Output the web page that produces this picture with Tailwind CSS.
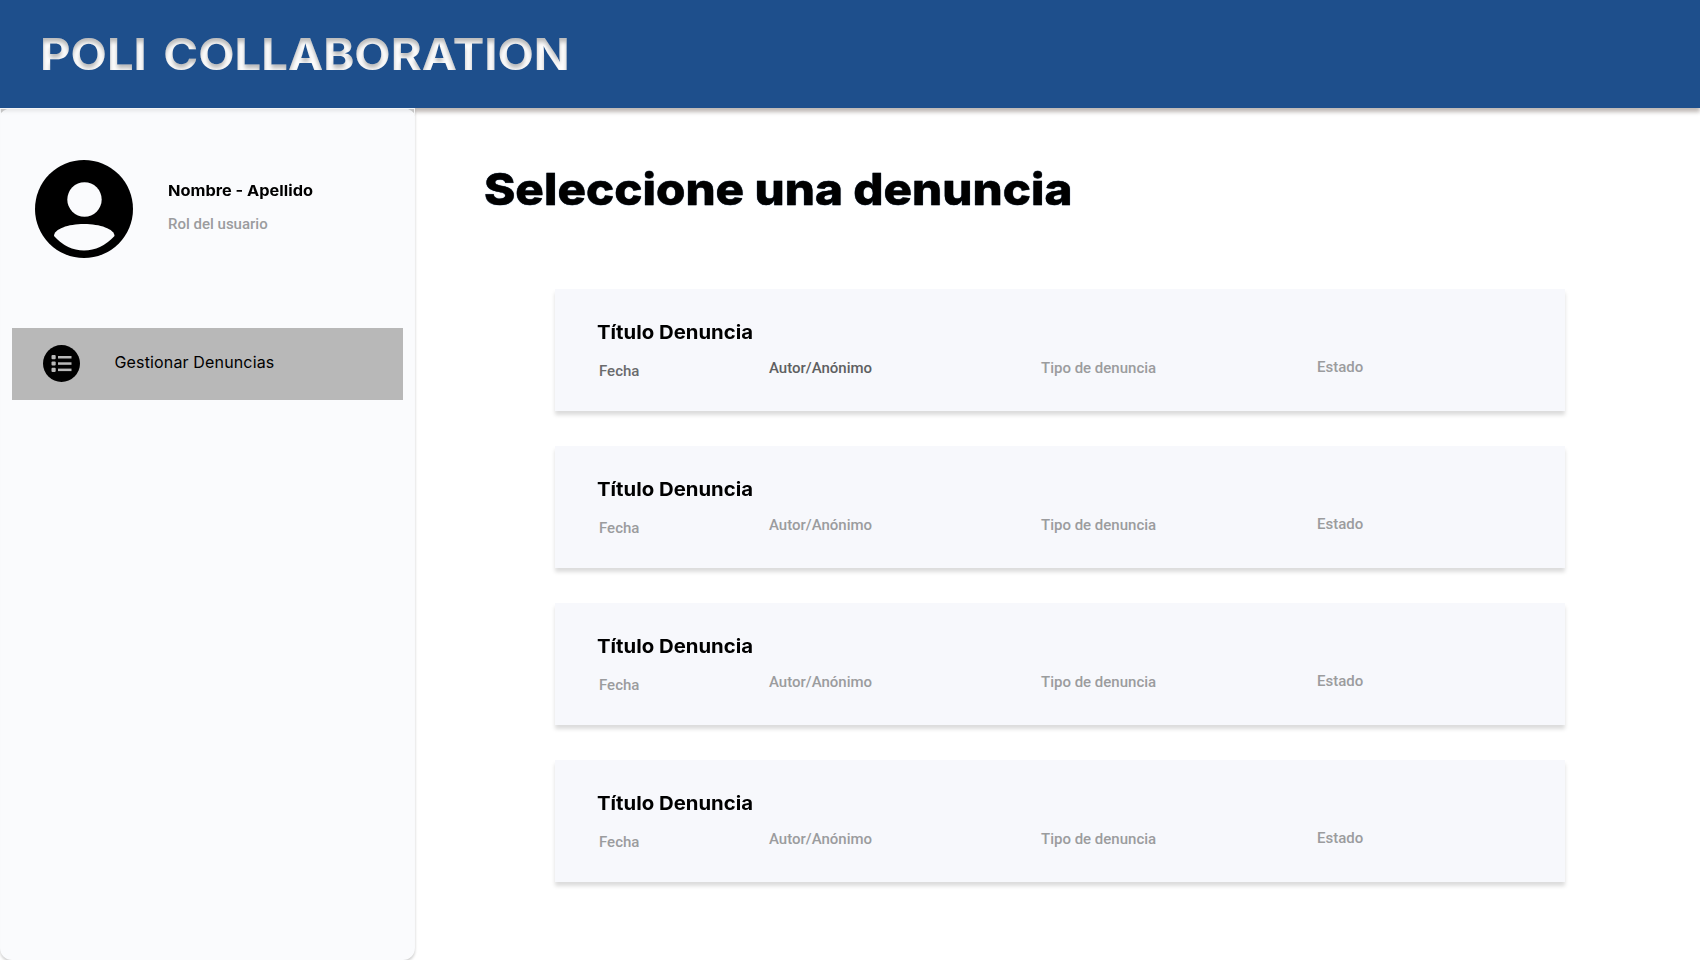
<!DOCTYPE html>
<html lang="es">
<head>
<meta charset="utf-8">
<title>Poli Collaboration</title>
<script src="https://cdn.jsdelivr.net/npm/@tailwindcss/browser@4"></script>
</head>
<body class="flex h-screen flex-col overflow-hidden bg-white font-['Inter',sans-serif] text-black">
<svg class="absolute h-0 w-0" aria-hidden="true">
  <filter id="inset" x="-5%" y="-5%" width="110%" height="110%" color-interpolation-filters="sRGB">
    <feOffset in="SourceAlpha" dy="4" result="moved"/>
    <feGaussianBlur in="moved" stdDeviation="2" result="soft"/>
    <feFlood flood-color="#000" flood-opacity=".27" result="ink"/>
    <feComposite in="ink" in2="soft" operator="out" result="outer"/>
    <feComposite in="outer" in2="SourceAlpha" operator="in" result="shade"/>
    <feMerge><feMergeNode in="SourceGraphic"/><feMergeNode in="shade"/></feMerge>
  </filter>
</svg>
<header class="h-[108px] shrink-0 bg-[#1e4f8c] pl-10 shadow-[0_4px_4px_rgba(40,20,10,0.3)]">
  <h1 class="w-max origin-left scale-x-[1.072] text-[44px] leading-[108px] font-bold text-white [filter:url(#inset)] [word-spacing:5px]">POLI COLLABORATION</h1>
</header>
<div class="flex min-h-0 flex-1">
  <aside class="relative w-[415px] shrink-0 rounded-b-xl bg-[#fafbfd] px-3 shadow-[0_2px_3px_rgba(0,0,0,0.2),inset_0_6px_4px_-3px_rgba(0,0,0,0.09)]">
    <svg class="absolute top-0 left-0 h-2 w-full" viewBox="0 0 415 8">
      <path d="M1 1H7Q3 2.500 1 5ZM414 1H408Q412 2.500 414 5Z" fill="#c4c4c4"/>
      <path d="M0 .5H415M414.500 0V8" stroke="#f4f5f6" fill="none"/>
    </svg>
    <div class="flex pt-[52px] pl-[23px]">
      <svg class="h-[98px] w-[98px]" viewBox="0 0 98 98">
        <circle cx="49" cy="49" r="49"/>
        <circle cx="49.5" cy="39.5" r="17.2" fill="#fafbfd"/>
        <path d="M19 76C19 69 33 64 49 64s30.500 5 30.500 12Q66 90.500 49 90.500T19 76Z" fill="#fafbfd"/>
      </svg>
      <div class="pt-[21px] pl-[34.500px]">
        <p class="w-max origin-left scale-x-[1.09] text-[15px] leading-5 font-bold">Nombre - Apellido</p>
        <p class="mt-[13px] ml-[0.5px] font-['Roboto',sans-serif] text-[15px] leading-5 font-medium text-[#9b9c9e]">Rol del usuario</p>
      </div>
    </div>
    <nav class="mt-[70px] flex h-[72px] items-center bg-[#b8b8b8] pl-[31px]">
      <svg class="mb-px h-[37px] w-[37px]" viewBox="0 0 37 37">
        <circle cx="18.500" cy="18.500" r="18.500"/>
        <g fill="#b8b8b8">
          <rect x="8.500" y="10" width="4.200" height="4.200" rx="1"/><rect x="15" y="11" width="13.500" height="2.500"/>
          <rect x="8.500" y="16.400" width="4.200" height="4.200" rx="1"/><rect x="15" y="17.300" width="13.500" height="2.500"/>
          <rect x="8.500" y="22.800" width="4.200" height="4.200" rx="1"/><rect x="15" y="23.600" width="13.500" height="2.500"/>
        </g>
      </svg>
      <a class="ml-[34.500px] pb-1 text-base leading-6 tracking-[0.15px]">Gestionar Denuncias</a>
    </nav>
  </aside>
  <main class="flex-1 pt-[51px]">
    <h2 class="ml-[69px] w-max origin-left scale-x-[1.068] text-[44.500px] leading-[60px] font-extrabold [-webkit-text-stroke:0.4px_#000] [text-shadow:0_0_1px_#1e4f8c]">Seleccione una denuncia</h2>
    <div id="list" class="mt-[70px] ml-[140px] flex w-[1010px] flex-col gap-[35px]"></div>
  </main>
</div>
<template id="card">
  <article class="h-[122px] bg-[#f7f8fc] pt-8 pl-[42px] shadow-[0_4px_4px_rgba(0,0,0,0.14)]">
    <h3 class="w-max origin-left scale-x-[1.07] text-[19px] leading-6 font-bold">Título Denuncia</h3>
    <div class="ml-0.5 grid grid-cols-[170px_272px_276px_1fr] font-['Roboto',sans-serif] text-[15px] leading-5 font-medium text-[#9b9c9e]">
      <span class="fecha pt-4">Fecha</span>
      <span class="autor pt-[13px]">Autor/Anónimo</span>
      <span class="pt-[13px]">Tipo de denuncia</span>
      <span class="pt-3">Estado</span>
    </div>
  </article>
</template>
<script>
const list = document.getElementById('list');
const card = document.getElementById('card');
for (let i = 0; i < 4; i++) {
  const node = card.content.cloneNode(true);
  if (i === 0) {
    node.querySelector('.fecha').classList.add('text-[#6a6b6d]');
    node.querySelector('.autor').classList.add('text-[#5e5f61]');
  }
  list.append(node);
}
</script>
</body>
</html>
